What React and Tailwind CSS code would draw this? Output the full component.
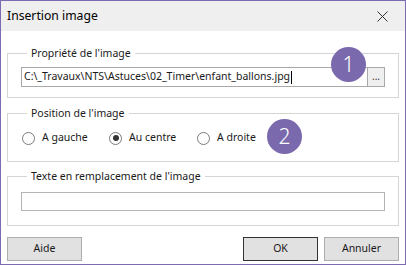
import React from 'react';

const font = { fontFamily: '"Noto Sans", "Open Sans", sans-serif' };

function Radio({ label, checked }) {
  return (
    <label className="flex items-center gap-[7px]">
      <span className="w-[13px] h-[13px] rounded-full border border-[#7a7a7a] bg-white flex items-center justify-center">
        {checked && <span className="w-[6px] h-[6px] rounded-full bg-[#333]"></span>}
      </span>
      <span>{label}</span>
    </label>
  );
}

function Group({ title, className, children }) {
  return (
    <fieldset className={`border border-[#d5d5d5] mx-[6px] px-[13px] min-w-0 ${className}`}>
      <legend className="ml-[6px] px-[4px] leading-[16px]">{title}</legend>
      {children}
    </fieldset>
  );
}

export default function App() {
  return (
    <div className="relative w-[406px] h-[265px] border border-[#7c6bb0] bg-white text-[10.5px] text-[#1a1a1a] flex flex-col select-none" style={font}>
      {/* title bar */}
      <div className="h-[30px] bg-[#efefef] flex items-center pl-[6px] pr-[17px] shrink-0">
        <div className="flex-grow text-[12.2px] text-black">Insertion image</div>
        <svg width="11" height="11" viewBox="0 0 11 11" className="text-[#333]">
          <path d="M0.5 0.5 L10.5 10.5 M10.5 0.5 L0.5 10.5" stroke="currentColor" strokeWidth="1" />
        </svg>
      </div>

      <Group title="Propriété de l'image" className="mt-[14px] pt-[6px] pb-[10px]">
        <div className="flex">
          <div className="flex-grow h-[20px] border border-[#a9a9a9] flex items-center pl-[2px] whitespace-nowrap overflow-hidden">
            C:\_Travaux\NTS\Astuces\02_Timer\enfant_ballons.jpg
            <span className="w-px h-[13px] bg-black ml-px"></span>
          </div>
          <div className="w-[17px] h-[20px] border border-[#a9a9a9] border-l-0 bg-[#efefef] flex items-center justify-center text-[10px] leading-none pb-[3px] text-[#333]">...</div>
        </div>
      </Group>

      <Group title="Position de l'image" className="mt-[7px] pt-[9px] pb-[15px]">
        <div className="flex items-center h-[16px] pl-[1px]">
          <div className="w-[87px]"><Radio label="A gauche" /></div>
          <div className="w-[88px]"><Radio label="Au centre" checked /></div>
          <Radio label="A droite" />
        </div>
      </Group>

      <Group title="Texte en remplacement de l'image" className="mt-[6px] pt-[8px] pb-[14px]">
        <div className="h-[19px] border border-[#b4b4b4]"></div>
      </Group>

      <div className="flex items-center px-[6px] mt-[11px]">
        <button className="w-[75px] h-[24px] bg-[#e1e1e1] border border-[#adadad]">Aide</button>
        <div className="flex-grow"></div>
        <button className="w-[75px] h-[24px] bg-[#e1e1e1] border border-[#333]">OK</button>
        <button className="w-[75px] h-[24px] bg-[#e1e1e1] border border-[#adadad] ml-[6px]">Annuler</button>
      </div>

      {/* step badges */}
      <div className="absolute left-[330px] top-[46px] w-[35px] h-[35px] rounded-full bg-[#7b69ae] text-white text-[21px] font-light flex items-center justify-center leading-none">1</div>
      <div className="absolute left-[266px] top-[118px] w-[35px] h-[35px] rounded-full bg-[#7b69ae] text-white text-[21px] font-light flex items-center justify-center leading-none">2</div>
    </div>
  );
}
